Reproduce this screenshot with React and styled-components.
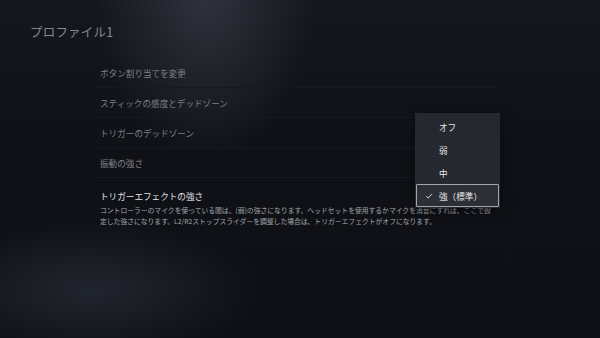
import React from "react";
import styled, { createGlobalStyle } from "styled-components";

const GlobalStyle = createGlobalStyle`
  html, body {
    margin: 0;
    padding: 0;
    background: #0e1016;
  }
  body {
    font-family: "Noto Sans CJK JP", "Noto Sans", sans-serif;
  }
`;

const Screen = styled.div`
  position: relative;
  width: 600px;
  height: 338px;
  overflow: hidden;
  background:
    radial-gradient(ellipse 110px 170px at 205px -10px, rgba(70, 74, 86, 0.55), rgba(70, 74, 86, 0) 100%),
    radial-gradient(ellipse 170px 70px at 90px 290px, rgba(48, 54, 66, 0.55), rgba(48, 54, 66, 0) 100%),
    linear-gradient(180deg, #15171e 0%, #0f1117 45%, #0e1015 100%);
`;

const Header = styled.div`
  height: 58px;
  padding-left: 30px;
  box-sizing: border-box;
  display: flex;
  align-items: flex-start;
  padding-top: 23px;
  font-size: 12.5px;
  line-height: 18px;
  color: #86888e;
  letter-spacing: 0.2px;
`;

const List = styled.div`
  margin-left: 95px;
  width: 403px;
`;

const Row = styled.div`
  height: 30px;
  box-sizing: border-box;
  padding-left: 5px;
  display: flex;
  align-items: center;
  border-bottom: 1px solid #161920;
  font-size: 8.6px;
  color: #7f8187;
`;

const Selected = styled.div`
  padding: 12px 0 0 5px;
`;

const SelectedTitle = styled.div`
  font-size: 8.6px;
  line-height: 12px;
  color: #e2e3e6;
`;

const Description = styled.div`
  margin-top: 3px;
  font-size: 6.8px;
  line-height: 11px;
  color: #a4a6ab;
  width: 396px;
`;

const Menu = styled.div`
  position: absolute;
  left: 415px;
  top: 113px;
  width: 85px;
  padding: 2px 1px 1px;
  box-sizing: border-box;
  background: rgba(40, 42, 49, 0.96);
  box-shadow: 0 2px 10px rgba(0, 0, 0, 0.5);
`;

const Option = styled.div`
  height: 23px;
  box-sizing: border-box;
  display: flex;
  align-items: center;
  padding-left: ${(p) => (p.active ? "8px" : "22px")};
  font-size: 8.6px;
  color: #e6e7ea;
  border: 1px solid ${(p) => (p.active ? "#a3a5ab" : "transparent")};
  border-radius: 1px;
  background: ${(p) => (p.active ? "#2d2f36" : "transparent")};
`;

const Check = styled.svg`
  width: 8px;
  height: 8px;
  margin-right: 6px;
`;

const options = ["オフ", "弱", "中", "強（標準）"];

const App = () => {
  return (
    <>
      <GlobalStyle />
      <Screen>
        <Header>プロファイル1</Header>
        <List>
          <Row>ボタン割り当てを変更</Row>
          <Row>スティックの感度とデッドゾーン</Row>
          <Row>トリガーのデッドゾーン</Row>
          <Row>振動の強さ</Row>
          <Selected>
            <SelectedTitle>トリガーエフェクトの強さ</SelectedTitle>
            <Description>
              コントローラーのマイクを使っている間は、[弱]の強さになります。ヘッドセットを使用するかマイクを消音にすれば、ここで設定した強さになります。L2/R2ストップスライダーを調整した場合は、トリガーエフェクトがオフになります。
            </Description>
          </Selected>
        </List>
        <Menu>
          {options.map((o, i) => {
            const active = i === options.length - 1;
            return (
              <Option key={o} active={active}>
                {active && (
                  <Check viewBox="0 0 10 10">
                    <path d="M1.5 5.2 L4 7.6 L8.6 2.4" fill="none" stroke="#e6e7ea" strokeWidth="1.1" />
                  </Check>
                )}
                {o}
              </Option>
            );
          })}
        </Menu>
      </Screen>
    </>
  );
};

export default App;
